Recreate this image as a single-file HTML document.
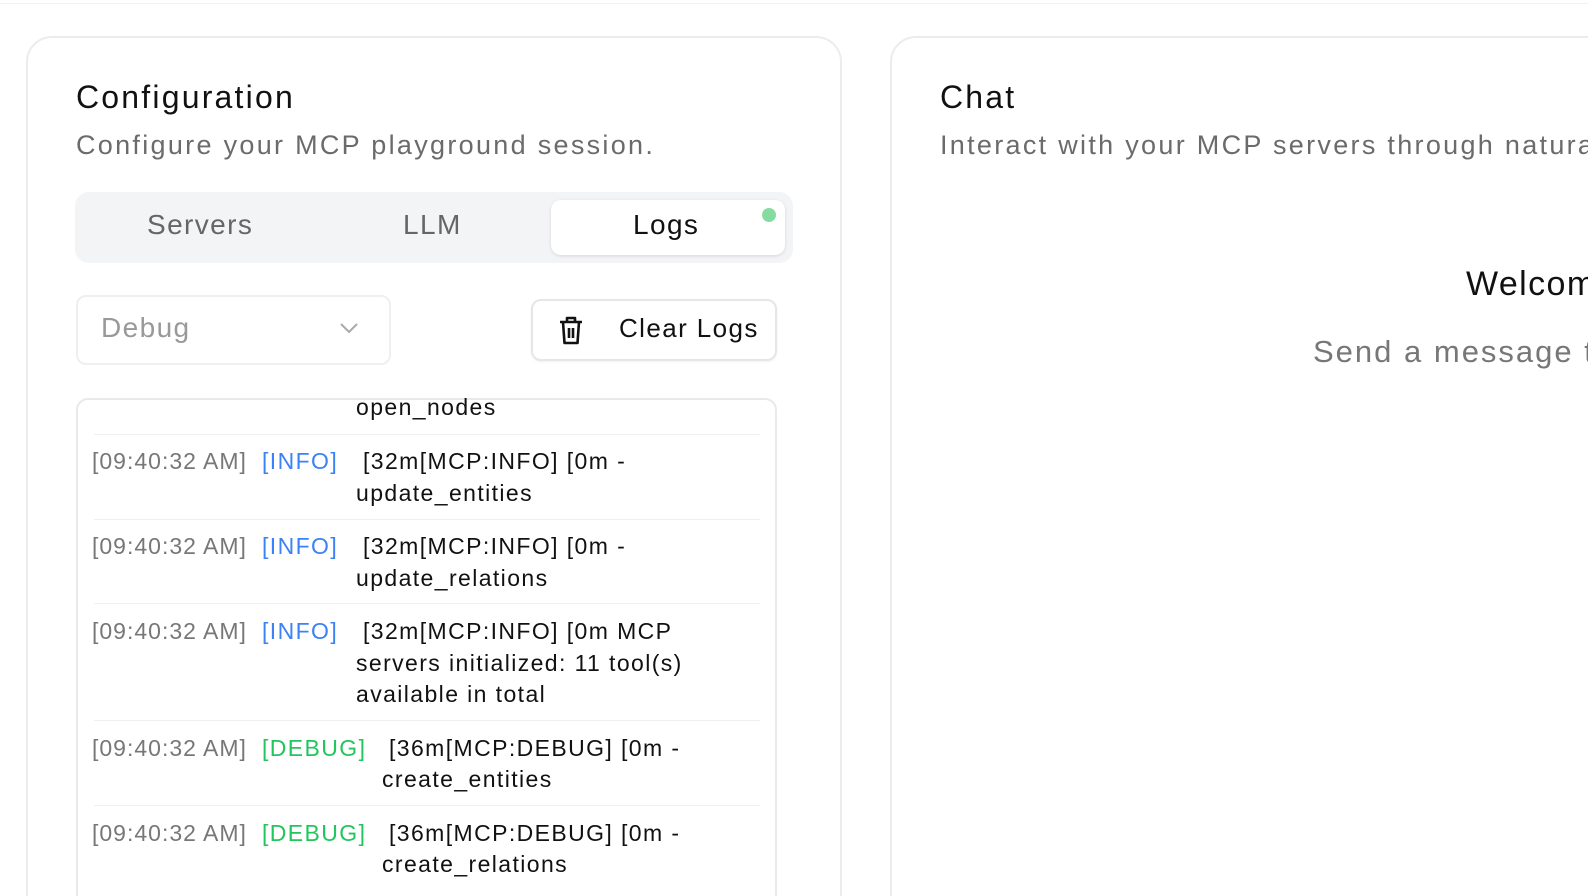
<!DOCTYPE html>
<html style="overflow:hidden;width:1588px;height:896px"><head><meta charset="utf-8"><style>
*{margin:0;padding:0;box-sizing:border-box}
body{width:1588px;height:896px;overflow:hidden;background:#fff;font-family:"Liberation Sans",sans-serif;position:relative;color:#111;letter-spacing:1.4px}
#w{position:absolute;left:0;top:0;width:1588px;height:896px;overflow:hidden}
.a{position:absolute;white-space:nowrap}
.card{position:absolute;border:2px solid #ececec;border-radius:26px;background:#fff}
.ts{color:#777;font-size:23px;letter-spacing:1px}
.info{color:#3b82f6;font-size:23px}
.dbg{color:#22c55e;font-size:23px}
.msg{font-size:23px;color:#111}
.sep{position:absolute;left:94px;width:666px;height:1px;background:#f0f0f0}
</style></head><body><div id="w">
<div class="a" style="left:0;top:0;width:1588px;height:4px;border-bottom:1px solid #f2f2f2"></div>

<div class="card" style="left:26px;top:36px;width:816px;height:900px"></div>
<div class="a" style="left:76px;top:79px;font-size:32px;letter-spacing:2.2px">Configuration</div>
<div class="a" style="left:76px;top:130px;font-size:27px;color:#6b6b6b;letter-spacing:2.3px">Configure your MCP playground session.</div>

<div class="a" style="left:75px;top:192px;width:718px;height:71px;background:#f3f4f5;border-radius:14px"></div>
<div class="a" style="left:147px;top:209px;font-size:28px;color:#666">Servers</div>
<div class="a" style="left:403px;top:209px;font-size:28px;color:#666">LLM</div>
<div class="a" style="left:551px;top:200px;width:234px;height:55px;background:#fff;border-radius:10px;box-shadow:0 1px 3px rgba(0,0,0,.12)"></div>
<div class="a" style="left:633px;top:209px;font-size:28px;color:#111">Logs</div>
<div class="a" style="left:762px;top:208px;width:14px;height:14px;border-radius:50%;background:#86dca0"></div>

<div class="a" style="left:76px;top:295px;width:315px;height:70px;border:2px solid #efefef;border-radius:10px"></div>
<div class="a" style="left:101px;top:312px;font-size:28px;color:#999">Debug</div>
<svg class="a" style="left:338px;top:320px" width="22" height="16" viewBox="0 0 22 16"><path d="M3 4l8 8 8-8" fill="none" stroke="#aaa" stroke-width="2"/></svg>

<div class="a" style="left:531px;top:299px;width:246px;height:62px;border:2px solid #e6e6e6;border-radius:10px;box-shadow:0 1px 2px rgba(0,0,0,.06)"></div>
<svg class="a" style="left:557px;top:314px" width="28" height="32" viewBox="0 0 28 32"><path d="M3 8h22M10 8V4h8v4M6 8l1.5 21h13L22 8M12 14v10M16 14v10" fill="none" stroke="#111" stroke-width="2.6" stroke-linejoin="round"/></svg>
<div class="a" style="left:619px;top:313px;font-size:26px">Clear Logs</div>

<div class="a" style="left:76px;top:398px;width:701px;height:520px;border:2px solid #e9e9e9;border-radius:12px"></div>
<div class="a msg" style="left:356px;top:394px">open_nodes</div>
<div class="sep" style="top:434px"></div>
<div class="a ts" style="left:92px;top:448px">[09:40:32 AM]</div><div class="a info" style="left:262px;top:448px">[INFO]</div>
<div class="a msg" style="left:363px;top:448px">[32m[MCP:INFO] [0m -</div><div class="a msg" style="left:356px;top:480px">update_entities</div>
<div class="sep" style="top:519px"></div>
<div class="a ts" style="left:92px;top:533px">[09:40:32 AM]</div><div class="a info" style="left:262px;top:533px">[INFO]</div>
<div class="a msg" style="left:363px;top:533px">[32m[MCP:INFO] [0m -</div><div class="a msg" style="left:356px;top:565px">update_relations</div>
<div class="sep" style="top:603px"></div>
<div class="a ts" style="left:92px;top:618px">[09:40:32 AM]</div><div class="a info" style="left:262px;top:618px">[INFO]</div>
<div class="a msg" style="left:363px;top:618px">[32m[MCP:INFO] [0m MCP</div><div class="a msg" style="left:356px;top:650px">servers initialized: 11 tool(s)</div><div class="a msg" style="left:356px;top:681px">available in total</div>
<div class="sep" style="top:720px"></div>
<div class="a ts" style="left:92px;top:735px">[09:40:32 AM]</div><div class="a dbg" style="left:262px;top:735px">[DEBUG]</div>
<div class="a msg" style="left:389px;top:735px">[36m[MCP:DEBUG] [0m -</div><div class="a msg" style="left:382px;top:766px">create_entities</div>
<div class="sep" style="top:805px"></div>
<div class="a ts" style="left:92px;top:820px">[09:40:32 AM]</div><div class="a dbg" style="left:262px;top:820px">[DEBUG]</div>
<div class="a msg" style="left:389px;top:820px">[36m[MCP:DEBUG] [0m -</div><div class="a msg" style="left:382px;top:851px">create_relations</div>

<div class="card" style="left:890px;top:36px;width:800px;height:900px"></div>
<div class="a" style="left:940px;top:79px;font-size:32px;letter-spacing:2.2px">Chat</div>
<div class="a" style="left:940px;top:130px;font-size:27px;color:#6b6b6b;letter-spacing:2.3px">Interact with your MCP servers through natural language.</div>
<div class="a" style="left:1466px;top:265px;font-size:34px">Welcome</div>
<div class="a" style="left:1313px;top:334px;font-size:31px;color:#777;letter-spacing:2px">Send a message to start</div>
</div></body></html>
